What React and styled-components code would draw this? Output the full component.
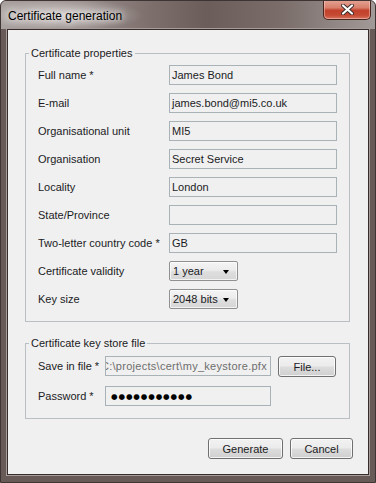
import React from "react";
import styled, { createGlobalStyle } from "styled-components";

const GlobalStyle = createGlobalStyle`
  html, body {
    margin: 0;
    padding: 0;
    background: #ffffff;
  }
  body {
    font-family: "Liberation Sans", Arial, sans-serif;
    font-size: 11px;
    color: #1b1b24;
  }
`;

const Window = styled.div`
  width: 376px;
  height: 483px;
  box-sizing: border-box;
  display: flex;
  flex-direction: column;
  border: 1px solid #3d3433;
  border-radius: 6px 6px 0 0;
  overflow: hidden;
  background: #685a57;
`;

const TitleBar = styled.div`
  height: 28px;
  flex: none;
  display: flex;
  align-items: flex-start;
  padding-left: 7px;
  background:
    radial-gradient(ellipse 80px 16px at 62px 14px, rgba(255, 255, 255, 0.55), rgba(255, 255, 255, 0) 100%),
    linear-gradient(90deg, #aaa2a0 0%, #978c8a 22%, #7d6f6c 40%, #6b5d5a 55%, #7a6d6a 75%, #a29a98 100%);
`;

const Caption = styled.span`
  font-size: 12px;
  line-height: 14px;
  margin-top: 8px;
  color: #000000;
  text-shadow: 0 0 6px rgba(255, 255, 255, 0.9), 0 0 10px rgba(255, 255, 255, 0.7);
`;

const CloseButton = styled.div`
  margin-left: auto;
  margin-right: 4px;
  margin-top: -1px;
  width: 48px;
  height: 20px;
  box-sizing: border-box;
  border: 1px solid #4a2520;
  border-top: none;
  border-radius: 0 0 5px 5px;
  display: flex;
  align-items: center;
  justify-content: center;
  background: linear-gradient(180deg, #e5a596 0%, #d8806c 40%, #c2412c 55%, #c64a33 80%, #d67360 100%);
  box-shadow: inset 0 0 0 1px rgba(255, 220, 210, 0.45);
`;

const Frame = styled.div`
  flex: 1;
  display: flex;
  padding: 0 6px 7px 6px;
  background: #685a57;
`;

const Panel = styled.div`
  flex: 1;
  display: flex;
  flex-direction: column;
  border: 1px solid #352c2b;
  box-shadow: 0 0 0 1px #a79e9c;
  background: #f0f0f0;
  padding: 0 15px 0 17px;
`;

const Group = styled.fieldset`
  margin: ${(p) => p.$top}px 3px 0 0;
  padding: ${(p) => p.$padTop}px 0 12px 0;
  border: 1px solid #b9c0c4;
  min-width: 0;
`;

const Legend = styled.legend`
  margin-left: 3px;
  padding: 0 2px;
  font-size: 11px;
  line-height: 13px;
  color: #1b1b24;
`;

const FieldGrid = styled.div`
  display: grid;
  grid-template-columns: ${(p) => p.$columns};
  column-gap: 7px;
  row-gap: ${(p) => p.$gap}px;
  align-items: center;
  padding: 0 ${(p) => p.$right}px 0 12px;
`;

const Label = styled.label`
  font-size: 11px;
  line-height: 13px;
  white-space: nowrap;
`;

const TextBox = styled.div`
  height: 20px;
  box-sizing: border-box;
  border: 1px solid #a9b3b7;
  background: #f0f0f0;
  padding: 0 3px 0 2px;
  display: flex;
  align-items: center;
  justify-content: ${(p) => (p.$scrolled ? "flex-end" : "flex-start")};
  overflow: hidden;
  white-space: nowrap;
  font-size: 11px;
  letter-spacing: ${(p) => (p.$scrolled ? "0.28px" : "normal")};
  color: ${(p) => (p.$muted ? "#6e6e6e" : "#1b1b24")};
  align-self: ${(p) => (p.$top ? "start" : "center")};
`;

const Dots = styled.span`
  font-family: "DejaVu Sans", sans-serif;
  font-size: 7.5px;
  letter-spacing: 0.9px;
  color: #000000;
  padding-left: 3px;
`;

const Dropdown = styled.div`
  justify-self: start;
  width: 69px;
  height: 20px;
  box-sizing: border-box;
  border: 1px solid #8f9191;
  border-radius: 2px;
  display: flex;
  align-items: center;
  padding: 0 8px 0 3px;
  font-size: 11px;
  background: linear-gradient(180deg, #f4f4f4 0%, #ececec 45%, #dedede 55%, #d6d6d6 100%);
  box-shadow: inset 0 0 0 1px rgba(255, 255, 255, 0.7);
`;

const Arrow = styled.span`
  margin-left: auto;
  width: 0;
  height: 0;
  border-left: 3.5px solid transparent;
  border-right: 3.5px solid transparent;
  border-top: 4px solid #000000;
  margin-top: 2px;
`;

const Button = styled.button`
  width: ${(p) => p.$width}px;
  height: 21px;
  box-sizing: border-box;
  border: 1px solid #707070;
  border-radius: 3px;
  padding: 0;
  font-family: "Liberation Sans", Arial, sans-serif;
  font-size: 11px;
  color: #1b1b24;
  background: linear-gradient(180deg, #f2f2f2 0%, #ebebeb 48%, #dddddd 52%, #cfcfcf 100%);
  box-shadow: inset 0 0 0 1px rgba(255, 255, 255, 0.75);
`;

const ButtonRow = styled.div`
  display: flex;
  justify-content: flex-end;
  gap: 7px;
  margin-top: 19px;
`;

const properties = [
  { label: "Full name *", value: "James Bond" },
  { label: "E-mail", value: "james.bond@mi5.co.uk" },
  { label: "Organisational unit", value: "MI5" },
  { label: "Organisation", value: "Secret Service" },
  { label: "Locality", value: "London" },
  { label: "State/Province", value: "" },
  { label: "Two-letter country code *", value: "GB" },
];

function CloseGlyph() {
  return (
    <svg width="13" height="11" viewBox="0 0 13 11">
      <path d="M2 1.5 L11 9.5 M11 1.5 L2 9.5" stroke="#3a2a2a" strokeWidth="4" strokeLinecap="round" />
      <path d="M2 1.5 L11 9.5 M11 1.5 L2 9.5" stroke="#ffffff" strokeWidth="2.2" strokeLinecap="round" />
    </svg>
  );
}

export default function App() {
  return (
    <>
      <GlobalStyle />
      <Window>
        <TitleBar>
          <Caption>Certificate generation</Caption>
          <CloseButton>
            <CloseGlyph />
          </CloseButton>
        </TitleBar>
        <Frame>
          <Panel>
            <Group $top={17} $padTop={5}>
              <Legend>Certificate properties</Legend>
              <FieldGrid $columns="124px 168px" $gap={8} $right={12}>
                {properties.map((row) => (
                  <React.Fragment key={row.label}>
                    <Label>{row.label}</Label>
                    <TextBox>{row.value}</TextBox>
                  </React.Fragment>
                ))}
                <Label>Certificate validity</Label>
                <Dropdown>
                  1 year
                  <Arrow />
                </Dropdown>
                <Label>Key size</Label>
                <Dropdown>
                  2048 bits
                  <Arrow />
                </Dropdown>
              </FieldGrid>
            </Group>

            <Group $top={15} $padTop={6}>
              <Legend>Certificate key store file</Legend>
              <FieldGrid $columns="60px 166px 58px" $gap={9} $right={13}>
                <Label>Save in file *</Label>
                <TextBox $muted $scrolled $top>
                  C:\projects\cert\my_keystore.pfx
                </TextBox>
                <Button $width={58}>File...</Button>
                <Label>Password *</Label>
                <TextBox>
                  <Dots>●●●●●●●●●●●</Dots>
                </TextBox>
              </FieldGrid>
            </Group>

            <ButtonRow>
              <Button $width={75}>Generate</Button>
              <Button $width={63}>Cancel</Button>
            </ButtonRow>
          </Panel>
        </Frame>
      </Window>
    </>
  );
}
